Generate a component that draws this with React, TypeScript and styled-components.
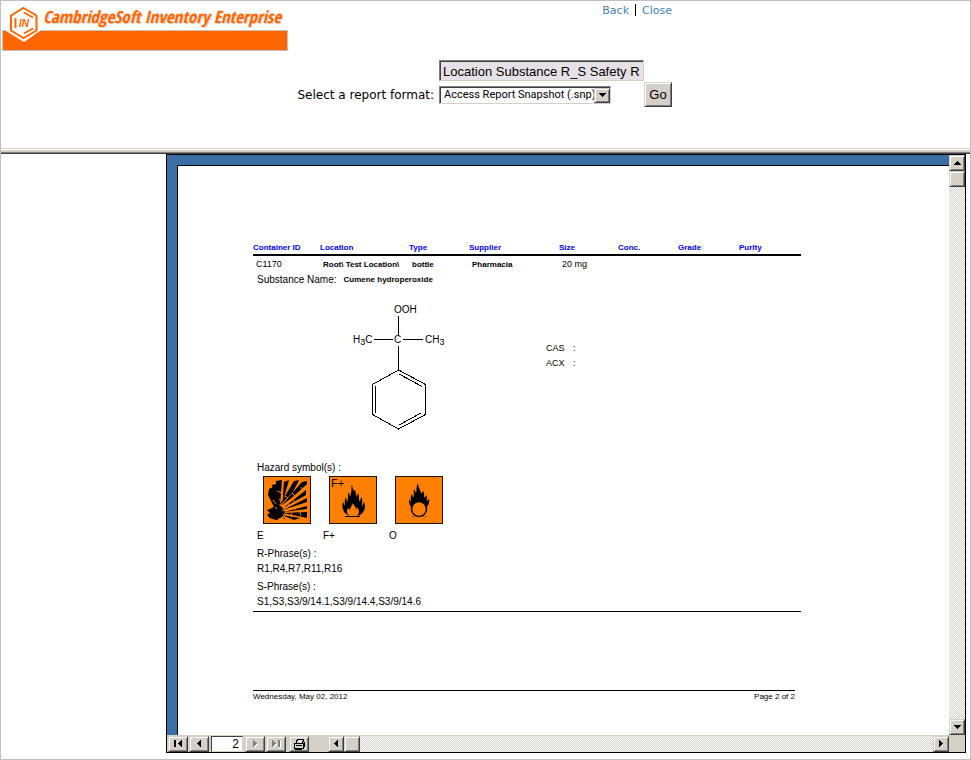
import React from "react";
import styled, { createGlobalStyle, css } from "styled-components";

const face = "#d4d0c8";
const orange = "#ff6600";
const hazardOrange = "#ff7f00";

const GlobalStyle = createGlobalStyle`
  *, *::before, *::after { box-sizing: border-box; }
  body { margin: 0; background: #fff; color: #000; font-family: "Liberation Sans", Arial, sans-serif; }
`;

const raised = css`
  background: ${face};
  border: 1px solid;
  border-color: ${face} #404040 #404040 ${face};
  box-shadow: inset 1px 1px 0 #fff, inset -1px -1px 0 #808080;
`;

const sunken = css`
  border: 1px solid;
  border-color: #808080 ${face} ${face} #808080;
  box-shadow: inset 1px 1px 0 #404040;
`;

const Frame = styled.div`
  min-height: 100vh;
  display: flex;
  flex-direction: column;
  border: 1px solid #c0c0c0;
`;

/* Header */

const Header = styled.header`
  display: flex;
  height: 147px;
  flex: none;
`;

const Brand = styled.div`
  display: grid;
  width: 286px;
  height: 49px;
  margin: 1px;
  grid-template-rows: 28px 21px;
  flex: none;
`;

const BrandBar = styled.div`
  grid-area: 2 / 1;
  background: ${orange};
  border: 1px solid #c8c0c0;
`;

const BrandName = styled.div`
  grid-area: 1 / 1;
  padding-left: 41px;
  font: italic bold 17px/30px "Liberation Sans Narrow", "Arial Narrow", "Open Sans Condensed", "DejaVu Sans Condensed", sans-serif;
  color: ${orange};
  white-space: nowrap;
  text-shadow: 1px 1px 0 #e0d0c8;
`;

const BrandMark = styled.svg`
  grid-area: 1 / 1 / 3 / 2;
  width: 41px;
  height: 43px;
  z-index: 1;
`;

const HeaderPanel = styled.div`
  display: flex;
  flex-direction: column;
  width: 383px;
`;

const Nav = styled.nav`
  display: flex;
  justify-content: flex-end;
  gap: 6px;
  font: 11px/19px "DejaVu Sans", Verdana, sans-serif;
`;

const NavLink = styled.a`
  color: #4682b4;
  text-decoration: none;
`;

const NavRule = styled.span`
  width: 1px;
  height: 12px;
  margin-top: 3px;
  background: #000;
`;

const Form = styled.form`
  display: grid;
  grid-template-columns: 1fr 205px 28px;
  grid-template-rows: 21px 25px;
  row-gap: 1px;
  align-items: center;
  margin-top: 40px;
`;

const FormatLabel = styled.label`
  grid-area: 2 / 1;
  padding-right: 5px;
  text-align: right;
  white-space: nowrap;
  font: 12px/24px "DejaVu Sans", Verdana, sans-serif;
`;

const NameInput = styled.input`
  grid-area: 1 / 2;
  width: 100%;
  height: 21px;
  padding: 1px 0 0 3px;
  background: #e6e1e6;
  font: 13px/17px "Liberation Sans", sans-serif;
  border-radius: 0;
  ${sunken}
`;

const SelectWrap = styled.div`
  position: relative;
  grid-area: 2 / 2;
  width: 172px;
  height: 18px;
`;

const FormatSelect = styled.select`
  appearance: none;
  display: block;
  width: 100%;
  height: 18px;
  padding: 0 16px 0 4px;
  background: #fff;
  color: #000;
  font: 11px/16px Roboto, "Liberation Sans", sans-serif;
  border-radius: 0;
  ${sunken}
`;

const SelectArrow = styled.span`
  position: absolute;
  top: 2px;
  right: 1px;
  display: grid;
  place-items: center;
  width: 16px;
  height: 15px;
  pointer-events: none;
  ${raised}
`;

const GoButton = styled.button`
  grid-area: 2 / 3;
  height: 25px;
  padding: 0;
  color: #000;
  font: 13px/18px "Liberation Sans", sans-serif;
  ${raised}
`;

const Divider = styled.div`
  height: 6px;
  flex: none;
  border-top: 1px solid ${face};
  border-bottom: 1px solid #404040;
  background: linear-gradient(#fff 1px, ${face} 1px 3px, #808080 3px);
`;

/* Snapshot viewer */

const Lower = styled.main`
  display: flex;
  flex: 1;
  padding: 0 4px 6px 165px;
`;

const Viewer = styled.section`
  display: flex;
  flex-direction: column;
  flex: 1;
  border: 1px solid #000;
`;

const ViewRow = styled.div`
  display: flex;
  flex: 1;
`;

const Desktop = styled.div`
  display: flex;
  flex: 1;
  padding: 10px 0 0 10px;
  background: #3a6ea5;
`;

const Paper = styled.article`
  flex: 1;
  border: solid #000;
  border-width: 1px 0 0 1px;
  background: #fff;
  padding: 75px 148px 32px 75px;
`;

const ToolButton = styled.button<{ $w?: number }>`
  display: grid;
  place-items: center;
  flex: none;
  width: ${(p) => p.$w ?? 16}px;
  height: 16px;
  padding: 0;
  ${raised}
`;

const Thumb = styled.span`
  flex: none;
  width: 16px;
  height: 16px;
  ${raised}
`;

const Track = styled.div<{ $vertical?: boolean }>`
  display: flex;
  flex-direction: ${(p) => (p.$vertical ? "column" : "row")};
  flex: ${(p) => (p.$vertical ? "none" : "1")};
  background: repeating-conic-gradient(${face} 0 25%, #fff 0 50%) 0 0 / 2px 2px;

  & > :last-child {
    margin-${(p) => (p.$vertical ? "top" : "left")}: auto;
  }
`;

const Toolbar = styled.div`
  display: flex;
  height: 17px;
  flex: none;
  border-top: 1px solid ${face};
  background: ${face};
`;

const Tools = styled.div`
  display: flex;
  gap: 1px;
  width: 161px;
  padding-left: 1px;
  flex: none;
`;

const PageInput = styled.input`
  width: 32px;
  height: 16px;
  margin: 0 1px;
  padding: 0 3px;
  border: 1px solid #404040;
  border-color: #404040 ${face} ${face} #404040;
  border-radius: 0;
  background: #fff;
  text-align: right;
  font: 12px/14px "Liberation Sans", sans-serif;
`;

const PrintButton = styled(ToolButton)`
  margin-left: 2px;
`;

const Corner = styled.span`
  width: 16px;
  flex: none;
`;

/* Report */

const Report = styled.section`
  height: 371px;
  border-bottom: 1px solid #000;
`;

const ContainerTable = styled.table`
  width: 100%;
  table-layout: fixed;
  border-collapse: collapse;
  white-space: nowrap;
  text-align: left;
`;

const HeadCell = styled.th<{ $w: number }>`
  width: ${(p) => p.$w}px;
  height: 14px;
  padding: 0;
  border-bottom: 2px solid #000;
  color: #0000ff;
  font: bold 8px/12px "Liberation Sans", sans-serif;
`;

const BodyCell = styled.td`
  height: 18px;
  padding: 0 0 0 3px;
  font: bold 8px/17px "Liberation Sans", sans-serif;

  &:first-child, &:nth-child(5) { font-weight: normal; font-size: 9px; }
`;

const Substance = styled.p`
  display: flex;
  gap: 7px;
  margin: 0 0 0 4px;
  font-size: 10px;
  line-height: 13px;
`;

const SubstanceName = styled.span`
  font-weight: bold;
  font-size: 8px;
`;

const Details = styled.div`
  display: flex;
  align-items: flex-start;
  height: 154px;
  padding: 16px 0 0 96px;
`;

const Molecule = styled.svg`
  width: 100px;
  height: 132px;
  flex: none;
  font: 10px "Liberation Sans", sans-serif;
`;

const Registry = styled.dl`
  display: grid;
  grid-template-columns: 27px auto;
  margin: 39px 0 0 97px;
  font-size: 9px;
  line-height: 15px;
`;

const Term = styled.dt``;
const Value = styled.dd`
  margin: 0;
`;

const Line = styled.p<{ $gap?: number }>`
  margin: ${(p) => p.$gap ?? 0}px 0 0 4px;
  font-size: 10px;
  line-height: 15px;
`;

const Hazards = styled.div`
  display: flex;
  margin: 0 0 0 4px;
`;

const Hazard = styled.figure`
  width: 66px;
  margin: 0;
`;

const HazardSign = styled.svg`
  display: block;
  width: 48px;
  height: 48px;
  margin: 1px 0 5px 6px;
  font: 11px "Liberation Sans", sans-serif;
`;

const HazardCode = styled.figcaption`
  font-size: 10px;
  line-height: 14px;
`;

const PageFooter = styled.footer`
  display: flex;
  justify-content: space-between;
  margin: 78px 6px 0 0;
  border-top: 1px solid #000;
  font-size: 8px;
  line-height: 12px;
`;

const arrows = {
  up: "M4 0h1v1h1v1h1v1h1v1H1V3h1V2h1V1h1z",
  down: "M1 0h7v1H7v1H6v1H5v1H4V3H3V2H2V1H1z",
  left: "M4 0v7H3V6H2V5H1V4H0V3h1V2h1V1h1V0z",
  right: "M0 0h1v1h1v1h1v1h1v1H3v1H2v1H1v1H0z",
  first: "M0 0h2v7H0zM8 0v7H7V6H6V5H5V4H4V3h1V2h1V1h1V0z",
  last: "M0 0h1v1h1v1h1v1h1v1H3v1H2v1H1v1H0zM6 0h2v7H6z",
};

const Arrow = ({ kind, disabled }: { kind: keyof typeof arrows; disabled?: boolean }) => {
  const tall = kind !== "up" && kind !== "down";
  const w = kind === "left" || kind === "right" ? 4 : 8;
  const h = tall ? 7 : 4;
  return (
    <svg width={w + 1} height={h + 1} viewBox={`0 0 ${w + 1} ${h + 1}`} shapeRendering="crispEdges" aria-hidden>
      {disabled && <path d={arrows[kind]} fill="#fff" transform="translate(1 1)" />}
      <path d={arrows[kind]} fill={disabled ? "#808080" : "#000"} />
    </svg>
  );
};

const Logo = () => (
  <BrandMark viewBox="0 0 41 43" aria-hidden>
    <path d="M21 3l17 9v17L22 40 4 29V12z" fill="#fff" />
    <path d="M21.500 6l13 7.500v15L21.500 36 9 28.500v-15z" fill="none" stroke={orange} strokeWidth="2" />
    <path d="M13.500 16v10M22 10.500l9 5M22 31.500l9-5" stroke={orange} strokeWidth="2" />
    <text x="17" y="25" fontSize="10" fontWeight="bold" fontStyle="italic" fontFamily="Liberation Sans" fill={orange}>IN</text>
  </BrandMark>
);

const SignBase = () => <rect x=".5" y=".5" width="47" height="47" fill={hazardOrange} stroke="#201000" />;

const Explosion = () => (
  <HazardSign viewBox="0 0 48 48">
    <SignBase />
    <path d="M12 33L5 19l1-6 4-2 5 21zM14 31L9 9l4-1 3 22zM13 5l6-1-2 25-3-2zM20 18l1-12 5-2-6 21zM16 30L31 5l5-1-6 12zM18 30L39 6l5-1v3L31 20zM20 32l23-18v5zM20 34l24-12v4zM21 36l23-6v3zM20 37l24-1v6zM19 39l18 3-6 2z" />
    <path d="M9 32l5-4 5 3 3 5-3 5-6 3-6-2-3-3 3-2-3-3z" />
    <path d="M20 41l2 2M14 43l1 1" stroke="#000" />
    <path d="M16 23l2 2M22 20l3 2M29 17l3 3M25 27l2 3M30 24l2 3M31 31l1 3M29 37l-1 4M38 11l2 3M37 36l1 4M14 15l5 2M10 24l3 4M12 31l2 2M19 34l2 1" stroke={hazardOrange} strokeWidth="1" />
  </HazardSign>
);

const Flame = () => (
  <HazardSign viewBox="0 0 48 48">
    <SignBase />
    <text x="2" y="11">F+</text>
    <path d="M21 40c-6-2-9-7-7-14l2 4c0-4-1-5 1-9l1 5c2-5 0-6 2-10l1 5c2-5 1-8 2-13 0 3 1 5 2 7l1-1c1 3 1 5 2 7l1-4c2 4 0 6 2 9l1-5c3 4 0 6 1 9l2-4c3 6-1 13-7 14 3-3 2-7 0-9l-1 3c0-3-2-4-3-7-1 3-3 4-3 7l-2-2c-2 3-1 6 2 8z" />
    <path d="M16 40.500h15" stroke="#000" strokeWidth="1" />
  </HazardSign>
);

const Oxidiser = () => (
  <HazardSign viewBox="0 0 48 48">
    <SignBase />
    <path d="M16 31c-2-3-2-5-2-8l2 3c0-3-1-5 1-8l1 4c2-4 0-6 1-9l2 4c1-4 0-6 2-10 0 5 3 7 3 11l2-3c2 3 0 5 2 7l1-3c2 3 0 4 1 6l2-2c1 3-1 6-2 8z" />
    <circle cx="24" cy="33" r="7.500" fill={hazardOrange} stroke="#000" strokeWidth="1.500" />
    <path d="M16 40.500h16" stroke="#803800" strokeWidth=".5" />
  </HazardSign>
);

const Structure = () => (
  <Molecule viewBox="349 302 100 132" role="img" aria-label="Cumene hydroperoxide structure">
    <g stroke="#000" fill="none" shapeRendering="crispEdges">
      <path d="M398.500 316v19M398.500 346v24M374 339.500h19M403 339.500h20" />
      <path d="M398.500 370l27 14.500v30L398.500 429l-26-14.500v-30zM375.500 386v27M399 374l23 12.500M399 425l22-12" />
    </g>
    <text x="394" y="313">OOH</text>
    <text x="353" y="343">H<tspan dy="2" fontSize="9">3</tspan><tspan dy="-2">C</tspan></text>
    <text x="394" y="343">C</text>
    <text x="425" y="343">CH<tspan dy="2" fontSize="9">3</tspan></text>
  </Molecule>
);

const columns: [string, number, string][] = [
  ["Container ID", 67, "C1170"],
  ["Location", 89, "Root\\ Test Location\\"],
  ["Type", 60, "bottle"],
  ["Supplier", 90, "Pharmacia"],
  ["Size", 59, "20 mg"],
  ["Conc.", 60, ""],
  ["Grade", 61, ""],
  ["Purity", 62, ""],
];

const hazards = [
  { code: "E", Sign: Explosion },
  { code: "F+", Sign: Flame },
  { code: "O", Sign: Oxidiser },
];

export default function App() {
  return (
    <>
      <GlobalStyle />
      <Frame>
        <Header>
          <Brand>
            <BrandBar />
            <BrandName>CambridgeSoft Inventory Enterprise</BrandName>
            <Logo />
          </Brand>
          <HeaderPanel>
            <Nav>
              <NavLink href="#back">Back</NavLink>
              <NavRule />
              <NavLink href="#close">Close</NavLink>
            </Nav>
            <Form onSubmit={(e) => e.preventDefault()}>
              <NameInput aria-label="Report name" readOnly value="Location Substance R_S Safety R" />
              <FormatLabel htmlFor="format">Select a report format:</FormatLabel>
              <SelectWrap>
                <FormatSelect id="format">
                  <option>Access Report Snapshot (.snp)</option>
                </FormatSelect>
                <SelectArrow><Arrow kind="down" /></SelectArrow>
              </SelectWrap>
              <GoButton type="submit">Go</GoButton>
            </Form>
          </HeaderPanel>
        </Header>
        <Divider />
        <Lower>
          <Viewer>
            <ViewRow>
              <Desktop>
                <Paper>
                  <Report>
                    <ContainerTable>
                      <thead>
                        <tr>{columns.map(([name, w]) => <HeadCell key={name} $w={w}>{name}</HeadCell>)}</tr>
                      </thead>
                      <tbody>
                        <tr>{columns.map(([name, , value]) => <BodyCell key={name}>{value}</BodyCell>)}</tr>
                      </tbody>
                    </ContainerTable>
                    <Substance>Substance Name: <SubstanceName>Cumene hydroperoxide</SubstanceName></Substance>
                    <Details>
                      <Structure />
                      <Registry>
                        <Term>CAS</Term><Value>:</Value>
                        <Term>ACX</Term><Value>:</Value>
                      </Registry>
                    </Details>
                    <Line $gap={20}>Hazard symbol(s) :</Line>
                    <Hazards>
                      {hazards.map(({ code, Sign }) => (
                        <Hazard key={code}><Sign /><HazardCode>{code}</HazardCode></Hazard>
                      ))}
                    </Hazards>
                    <Line $gap={3}>R-Phrase(s) :</Line>
                    <Line>R1,R4,R7,R11,R16</Line>
                    <Line $gap={3}>S-Phrase(s) :</Line>
                    <Line>S1,S3,S3/9/14.1,S3/9/14.4,S3/9/14.6</Line>
                  </Report>
                  <PageFooter>
                    <span>Wednesday, May 02, 2012</span>
                    <span>Page 2 of 2</span>
                  </PageFooter>
                </Paper>
              </Desktop>
              <Track $vertical>
                <ToolButton aria-label="Scroll up"><Arrow kind="up" /></ToolButton>
                <Thumb />
                <ToolButton aria-label="Scroll down"><Arrow kind="down" /></ToolButton>
              </Track>
            </ViewRow>
            <Toolbar>
              <Tools>
                <ToolButton $w={20} aria-label="First page"><Arrow kind="first" /></ToolButton>
                <ToolButton $w={20} aria-label="Previous page"><Arrow kind="left" /></ToolButton>
                <PageInput aria-label="Page" defaultValue="2" />
                <ToolButton $w={20} aria-label="Next page"><Arrow kind="right" disabled /></ToolButton>
                <ToolButton $w={20} aria-label="Last page"><Arrow kind="last" disabled /></ToolButton>
                <PrintButton $w={20} aria-label="Print">
                  <svg width="12" height="11" viewBox="0 0 12 11" shapeRendering="crispEdges" fill="none" stroke="#000" aria-hidden>
                    <path d="M3.500 3.500v-2h1v-1h6v2h-1v1M1.500 4.500h9v5h-9zM11.500 3v5M3 6.500h6M2 10.500h7" />
                    <path d="M5 2.500h4" stroke="#fff" />
                  </svg>
                </PrintButton>
              </Tools>
              <Track>
                <ToolButton aria-label="Scroll left"><Arrow kind="left" /></ToolButton>
                <Thumb />
                <ToolButton aria-label="Scroll right"><Arrow kind="right" /></ToolButton>
              </Track>
              <Corner />
            </Toolbar>
          </Viewer>
        </Lower>
      </Frame>
    </>
  );
}
